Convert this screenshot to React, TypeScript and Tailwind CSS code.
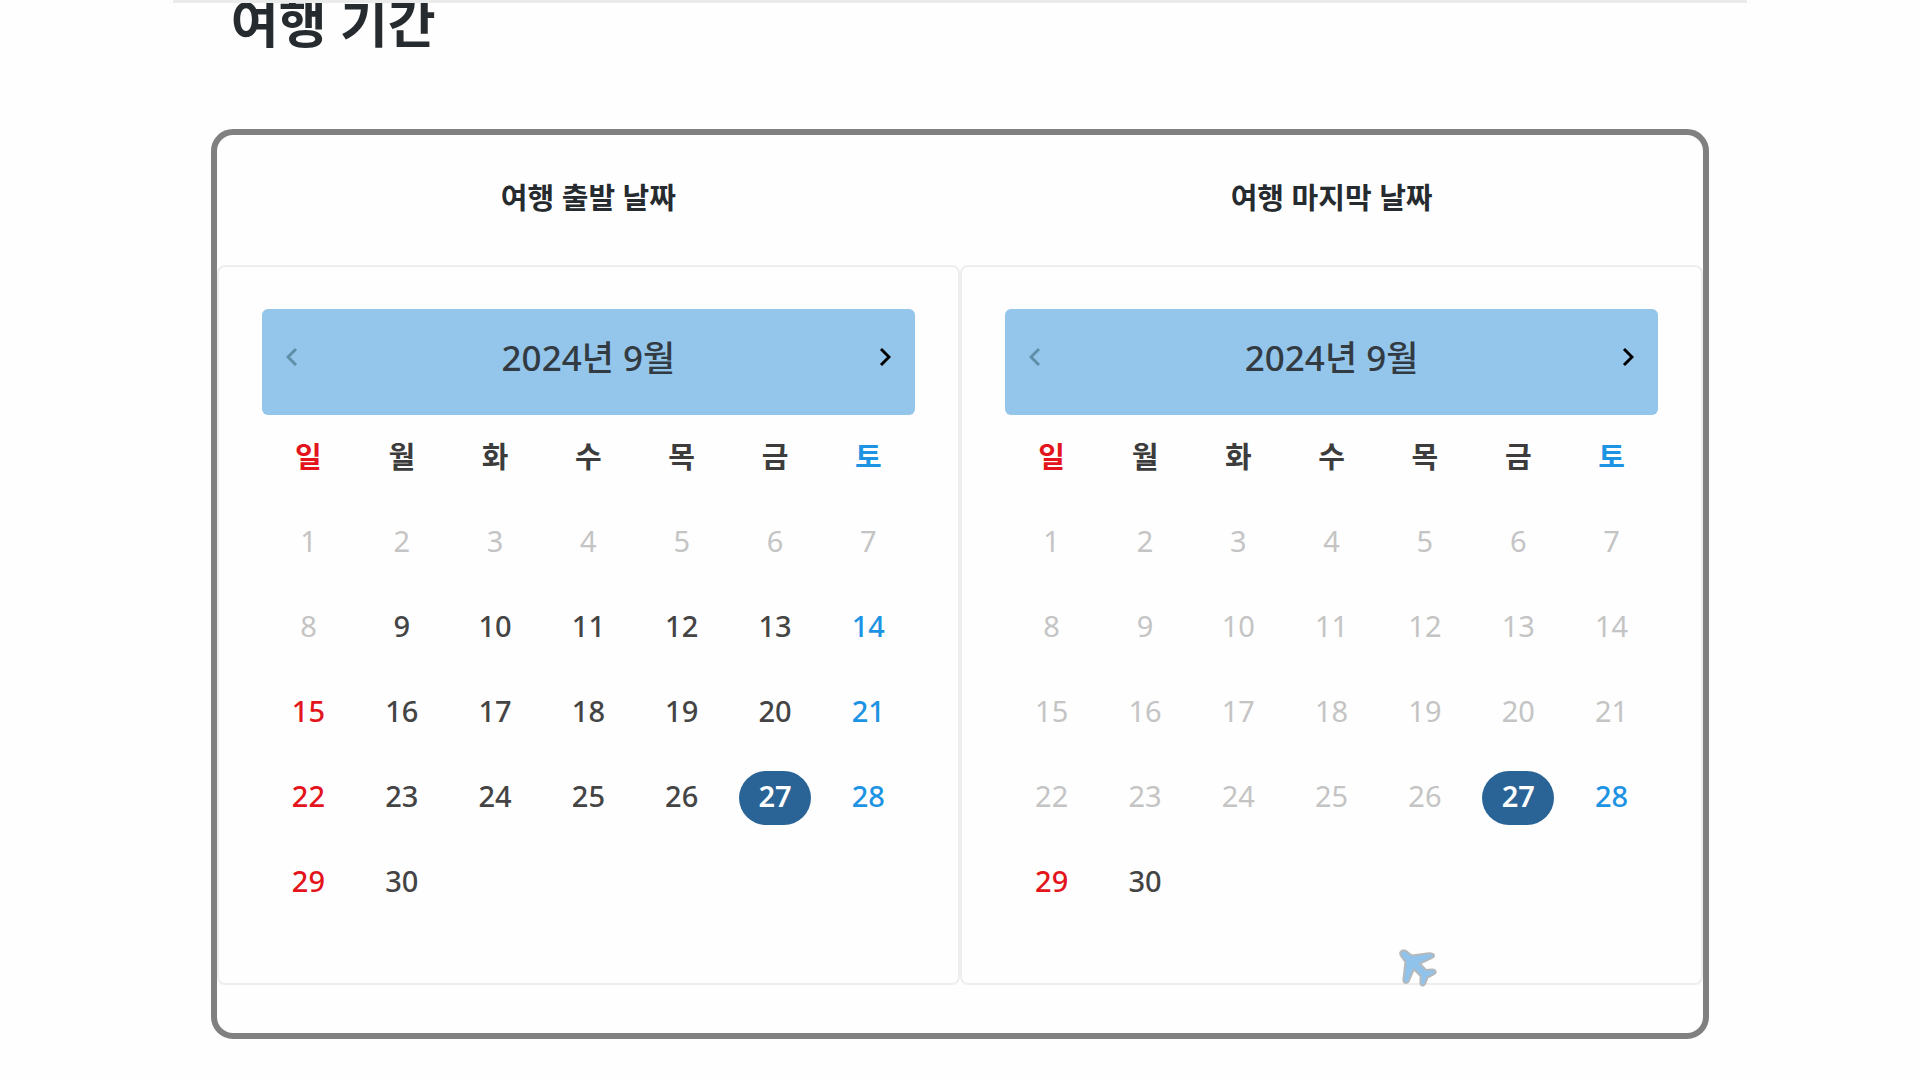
import React, { useState } from "react";
import { clsx } from "clsx";

const WEEKDAYS = ["일", "월", "화", "수", "목", "금", "토"];
const WEEKS = [0, 1, 2, 3, 4];
const LAST_DAY = 30;

function Chevron({ flip = false }: { flip?: boolean }) {
  return (
    <svg viewBox="0 0 12 20" className="h-5 w-3" fill="none" stroke="currentColor" strokeWidth="3" aria-hidden="true">
      <path d={flip ? "M2 2 L10 10 L2 18" : "M10 2 L2 10 L10 18"} />
    </svg>
  );
}

function Plane() {
  return (
    <svg viewBox="0 0 38 38" className="h-[38px] w-[38px]" aria-hidden="true">
      <path
        d="M2 2.5 C4 0.5 7 1.5 9.5 4 L13 6.5 L30 4.2 C34 3.8 37 6.5 33.5 8.6 L21 14.6 L27 21 L33 20.4 C37.5 20.6 37.6 24 34.5 25.3 L28.5 28.6 L26.4 34.2 C25 37.6 21.4 37 21.4 33.5 L21.6 27 L14.8 20.4 L10 31.6 C8.6 35.2 4.2 34.4 4.4 30.6 L6.4 13 L4 9.6 C1.5 7 0.2 4.5 2 2.5 Z"
        fill="#90c3ec"
        stroke="#b3b9bd"
        strokeWidth="2"
        strokeLinejoin="round"
      />
    </svg>
  );
}

function Calendar({ firstEnabled, label }: { firstEnabled: number; label: string }) {
  const [selected, setSelected] = useState(27);
  return (
    <section
      aria-label={label}
      className="flex-1 rounded-lg border-2 border-[#eeeeee] px-[43px] pt-[42px] pb-[58px]"
    >
      <div className="flex h-[106px] items-center justify-between rounded-md bg-[#94c6ec] px-6">
        <button type="button" disabled aria-label="이전 달" className="pb-2.5 text-[#5f8fa8]">
          <Chevron />
        </button>
        <h3 className="pb-2 text-[35px] leading-[48px] font-medium text-[#333b42]">2024년 9월</h3>
        <button type="button" aria-label="다음 달" className="pb-2.5 text-black">
          <Chevron flip />
        </button>
      </div>
      <table className="w-full table-fixed text-center">
        <thead>
          <tr className="h-[85px]">
            {WEEKDAYS.map((day, i) => (
              <th
                key={day}
                scope="col"
                className={clsx(
                  "p-0 pb-0.5 text-[29px] leading-10 font-bold",
                  i === 0 ? "text-[#e3141b]" : i === 6 ? "text-[#1d93e3]" : "text-[#3c3c3c]",
                )}
              >
                {day}
              </th>
            ))}
          </tr>
        </thead>
        <tbody>
          {WEEKS.map((week) => (
            <tr key={week} className="h-[85px]">
              {WEEKDAYS.map((name, i) => {
                const day = week * 7 + i + 1;
                if (day > LAST_DAY) return <td key={name} className="p-0" />;
                const disabled = day < firstEnabled;
                const active = day === selected;
                return (
                  <td key={name} className="p-0">
                    <button
                      type="button"
                      disabled={disabled}
                      aria-pressed={active}
                      onClick={() => setSelected(day)}
                      className={clsx(
                        "h-[54px] w-[72px] rounded-[27px] pb-1 align-middle text-[29px] leading-10",
                        disabled
                          ? "text-[#c4c4c4]"
                          : active
                            ? "bg-[#2a6496] font-semibold text-white"
                            : i === 0
                              ? "font-medium text-[#e3141b]"
                              : i === 6
                                ? "font-medium text-[#1d93e3]"
                                : "font-medium text-[#444444]",
                      )}
                    >
                      {day}
                    </button>
                  </td>
                );
              })}
            </tr>
          ))}
        </tbody>
      </table>
    </section>
  );
}

export default function App() {
  return (
    <div className="min-h-screen overflow-hidden bg-[#fefefe] font-['Noto_Sans','Noto_Sans_CJK_KR',sans-serif]">
      <main className="mx-auto w-[82%] overflow-hidden border-t-3 border-[#e9ecea] px-[38px]">
        <h1 className="-mt-4 pl-5 text-[52px] leading-[72px] font-bold text-[#262b2f]">여행 기간</h1>
        <div className="relative mt-[70px] rounded-[22px] border-[6px] border-[#808080] pb-12">
          <div className="flex h-[130px] items-center pb-1 text-center text-[29px] leading-10 font-bold text-[#262b2f]">
            <h2 className="flex-1">여행 출발 날짜</h2>
            <h2 className="flex-1">여행 마지막 날짜</h2>
          </div>
          <div className="flex">
            <Calendar label="여행 출발 날짜" firstEnabled={9} />
            <Calendar label="여행 마지막 날짜" firstEnabled={27} />
          </div>
          <div className="absolute right-[266px] bottom-[46px]">
            <Plane />
          </div>
        </div>
      </main>
    </div>
  );
}
